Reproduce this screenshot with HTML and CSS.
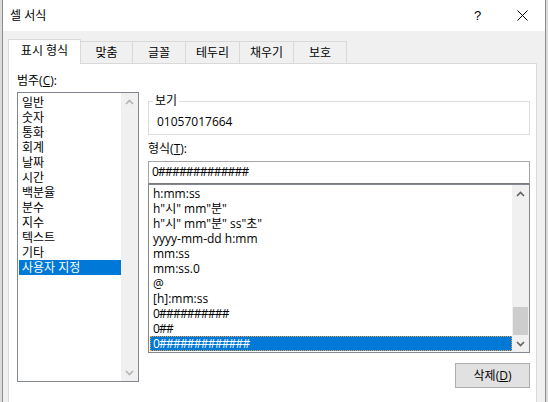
FILE: index.html
```html
<!DOCTYPE html>
<html lang="ko">
<head>
<meta charset="utf-8">
<title>셀 서식</title>
<link rel="stylesheet" href="styles.css">
</head>
<body>
<div class="screen">
  <div class="edge"></div>
  <div class="dialog">
    <div class="titlebar">
      <span class="title">셀 서식</span>
      <span class="tbtn help">?</span>
      <span class="tbtn close">
        <svg width="11" height="11" viewBox="0 0 11 11"><path d="M0.5 0.5 L10.5 10.5 M10.5 0.5 L0.5 10.5" stroke="#000" stroke-width="1" fill="none"/></svg>
      </span>
    </div>
    <div class="body">
      <div class="tabs">
        <div class="tab active">표시 형식</div>
        <div class="tab t2">맞춤</div>
        <div class="tab t3">글꼴</div>
        <div class="tab t4">테두리</div>
        <div class="tab t5">채우기</div>
        <div class="tab t6">보호</div>
      </div>
      <div class="panel">
        <div class="left">
          <div class="label">범주(<u>C</u>):</div>
          <div class="listbox cat">
            <ul class="items">
              <li>일반</li>
              <li>숫자</li>
              <li>통화</li>
              <li>회계</li>
              <li>날짜</li>
              <li>시간</li>
              <li>백분율</li>
              <li>분수</li>
              <li>지수</li>
              <li>텍스트</li>
              <li>기타</li>
              <li class="sel">사용자 지정</li>
            </ul>
            <div class="vscroll light">
              <div class="arrow"><svg width="9" height="6" viewBox="0 0 9 6"><path d="M1 5 L4.5 1.5 L8 5" stroke="currentColor" stroke-width="1.6" fill="none"/></svg></div>
              <div class="track"></div>
              <div class="arrow"><svg width="9" height="6" viewBox="0 0 9 6"><path d="M1 1 L4.5 4.5 L8 1" stroke="currentColor" stroke-width="1.6" fill="none"/></svg></div>
            </div>
          </div>
        </div>
        <div class="right">
          <fieldset class="sample">
            <legend>보기</legend>
            <div class="sample-value">01057017664</div>
          </fieldset>
          <div class="label fmt-label">형식(<u>T</u>):</div>
          <div class="input hashes">0#############</div>
          <div class="listbox fmt">
            <ul class="items">
              <li>h:mm:ss</li>
              <li>h"시" mm"분"</li>
              <li>h"시" mm"분" ss"초"</li>
              <li>yyyy-mm-dd h:mm</li>
              <li>mm:ss</li>
              <li>mm:ss.0</li>
              <li>@</li>
              <li>[h]:mm:ss</li>
              <li class="hashes">0##########</li>
              <li class="hashes">0##</li>
              <li class="sel focus hashes">0#############</li>
            </ul>
            <div class="vscroll dark">
              <div class="arrow"><svg width="9" height="6" viewBox="0 0 9 6"><path d="M1 5 L4.5 1.5 L8 5" stroke="currentColor" stroke-width="1.6" fill="none"/></svg></div>
              <div class="track"><div class="thumb"></div></div>
              <div class="arrow"><svg width="9" height="6" viewBox="0 0 9 6"><path d="M1 1 L4.5 4.5 L8 1" stroke="currentColor" stroke-width="1.6" fill="none"/></svg></div>
            </div>
          </div>
          <div class="actions">
            <button class="btn">삭제(<u>D</u>)</button>
          </div>
        </div>
      </div>
    </div>
  </div>
  <div class="edge"></div>
</div>
</body>
</html>
```

FILE: styles.css
```css
* { box-sizing: border-box; }
html, body {
  margin: 0;
  padding: 0;
  width: 548px;
  height: 402px;
  overflow: hidden;
  background: #dadada;
  font-family: "Open Sans", "Noto Sans CJK KR", sans-serif;
  font-size: 12px;
  color: #000;
}
.screen {
  display: flex;
  width: 548px;
  height: 402px;
}
.edge {
  width: 2px;
  flex: none;
  background: #dcdcdc;
}
.dialog {
  width: 544px;
  flex: none;
  border-left: 1px solid #8c8c8c;
  border-right: 1px solid #8c8c8c;
  display: flex;
  flex-direction: column;
  background: #f0f0f0;
}
.titlebar {
  height: 31px;
  background: #fff;
  display: flex;
  align-items: center;
  flex: none;
}
.title {
  padding-left: 7px;
  flex: 1;
  line-height: 16px;
}
.tbtn {
  width: 45px;
  height: 31px;
  display: flex;
  align-items: center;
  justify-content: center;
}
.help {
  font-family: "Liberation Sans", sans-serif;
  font-size: 13px;
}
.body {
  flex: 1;
  padding: 8px 0 0 5px;
  overflow: hidden;
}
.tabs {
  display: flex;
  align-items: flex-end;
  height: 24px;
}
.tab {
  height: 22px;
  border: 1px solid #d9d9d9;
  border-bottom: none;
  margin-left: -1px;
  background: #f0f0f0;
  display: flex;
  align-items: center;
  justify-content: center;
  line-height: 16px;
}
.tab.active {
  margin-left: 0;
  height: 25px;
  width: 73px;
  background: #fff;
  margin-bottom: -1px;
  position: relative;
  z-index: 1;
  padding-bottom: 2px;
}
.t2 { width: 53px; }
.t3 { width: 54px; }
.t4 { width: 55px; }
.t5 { width: 55px; }
.t6 { width: 54px; }
.panel {
  width: 529px;
  height: 350px;
  border: 1px solid #d9d9d9;
  background: #fff;
  display: flex;
  padding-left: 8px;
}
.left {
  width: 122px;
  flex: none;
}
.label {
  line-height: 16px;
  height: 16px;
}
.left .label {
  margin-top: 9px;
}
.listbox {
  border: 1px solid #828790;
  background: #fff;
  display: flex;
}
.listbox.cat {
  margin-top: 3px;
  height: 290px;
}
.items {
  list-style: none;
  margin: 0;
  padding: 2px 0 0 1px;
  flex: 1;
  min-width: 0;
}
.items li {
  height: 15px;
  line-height: 15px;
  padding-left: 3px;
  white-space: nowrap;
}
.items li.sel {
  background: #0078d7;
  color: #fff;
}
.items li.focus {
  outline: 1px dotted #e8a040;
  outline-offset: -1px;
}
.hashes {
  letter-spacing: -0.8px;
}
.vscroll {
  width: 17px;
  flex: none;
  background: #f0f0f0;
  display: flex;
  flex-direction: column;
}
.vscroll.light { color: #b4b4b4; }
.vscroll.dark { color: #606060; }
.arrow {
  height: 17px;
  display: flex;
  align-items: center;
  justify-content: center;
  flex: none;
}
.track {
  flex: 1;
  display: flex;
  flex-direction: column;
  justify-content: flex-end;
}
.thumb {
  height: 28px;
  margin: 0 1px;
  background: #cdcdcd;
}
.right {
  width: 382px;
  margin-left: 9px;
  flex: none;
}
.sample {
  margin: 29px 0 0 0;
  padding: 5px 8px 4px;
  border: 1px solid #dcdcdc;
  min-inline-size: 0;
}
.sample legend {
  padding: 0 2px;
  margin-left: -4px;
  line-height: 16px;
}
.sample-value {
  line-height: 16px;
}
.fmt-label {
  margin-top: 6px;
}
.input {
  margin-top: 4px;
  height: 23px;
  border: 1px solid #a6a6a6;
  border-bottom-color: #7a7a7a;
  padding-left: 3px;
  line-height: 19px;
}
.listbox.fmt {
  height: 169px;
}
.listbox.fmt .items {
  padding-top: 1px;
}
.actions {
  display: flex;
  justify-content: flex-end;
  margin-top: 10px;
}
.btn {
  width: 75px;
  height: 25px;
  border: 1px solid #adadad;
  background: #e1e1e1;
  font-family: inherit;
  font-size: 12px;
  color: #000;
  padding: 0;
  line-height: 16px;
}
```
